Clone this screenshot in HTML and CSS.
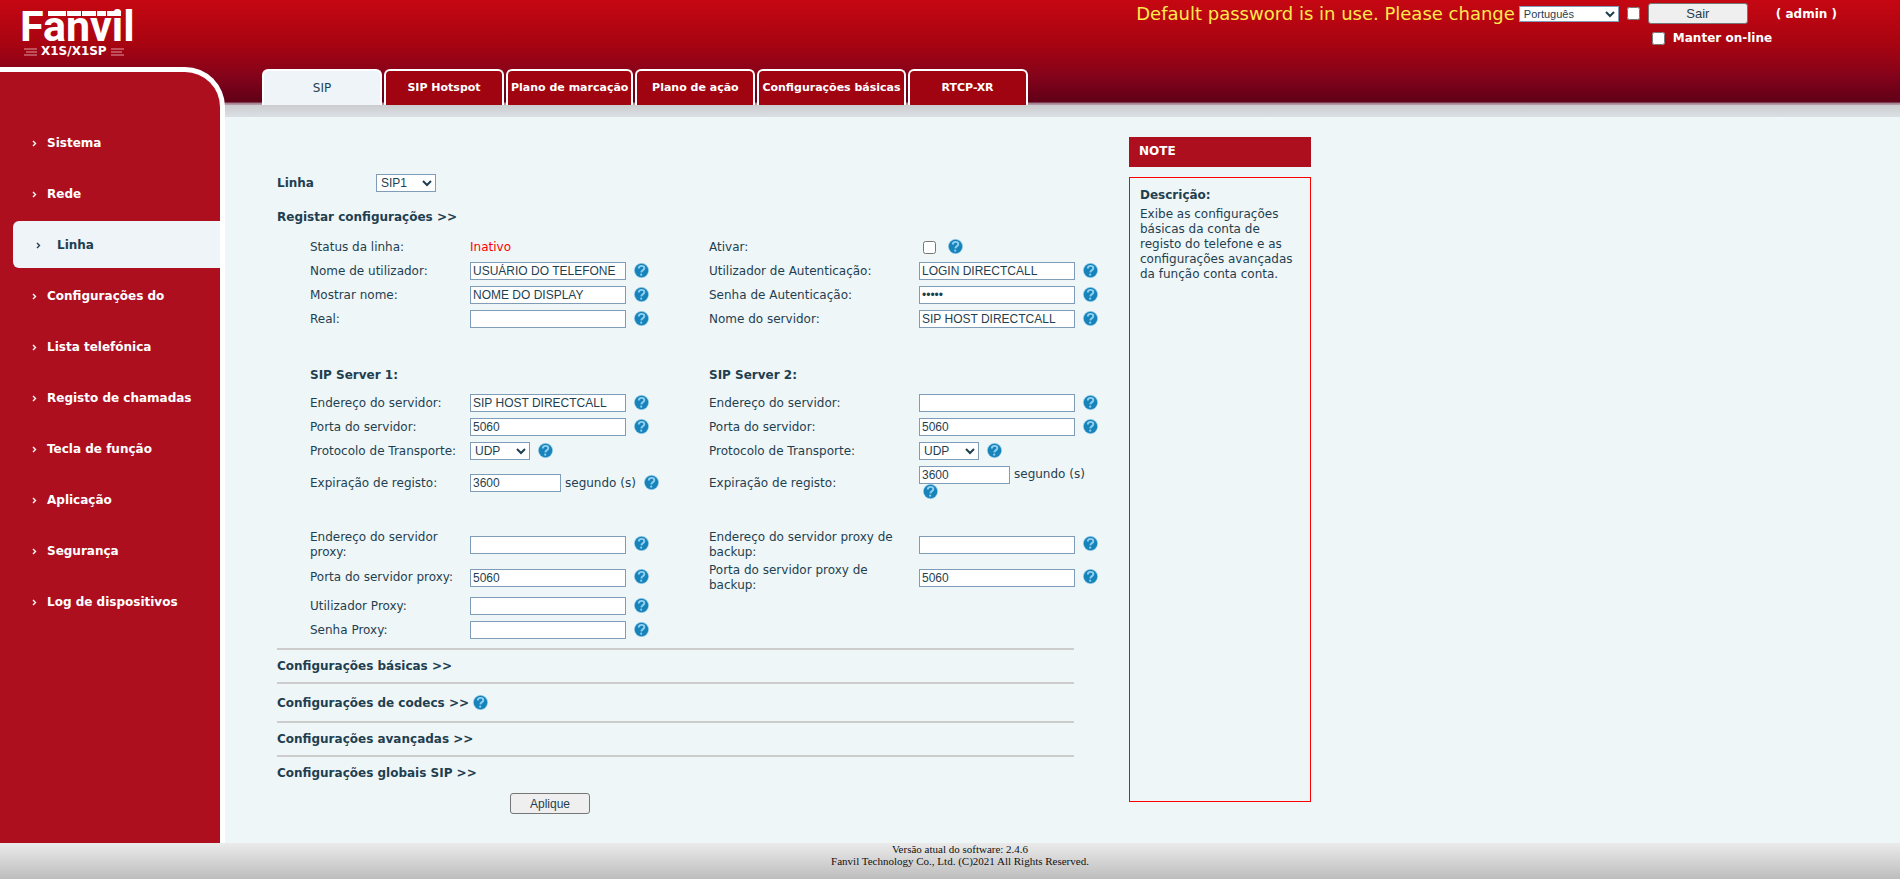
FILE: index.html
```html
<!DOCTYPE html>
<html lang="pt">
<head>
<meta charset="utf-8">
<title>Fanvil X1S/X1SP</title>
<link rel="stylesheet" href="styles.css">
</head>
<body>
<svg class="sprite" aria-hidden="true">
  <symbol id="help" viewBox="0 0 15 15">
    <circle cx="7.5" cy="7.5" r="7.4" fill="#8cc6e4"/>
    <circle cx="7.5" cy="7.5" r="6.7" fill="#1783bb"/>
    <path d="M4.800 5.600C4.800 3.800 6 2.900 7.500 2.900s2.800.8 2.800 2.300C10.300 7.200 7.500 7 7.300 9.400" fill="none" stroke="#8fd0f0" stroke-width="1.900"/>
    <circle cx="7.200" cy="11.700" r="1.100" fill="#8fd0f0"/>
  </symbol>
  <symbol id="arrow" viewBox="0 0 5 7">
    <path d="M1 1l2.500 2.500L1 6" fill="none" stroke="currentColor" stroke-width="1.400"/>
  </symbol>
</svg>
<div class="page">
  <div class="left">
    <div class="brand">
      <svg class="logo" viewBox="0 0 114 32" role="img" aria-label="Fanvil">
        <text class="logo-text" x="0" y="31">Fanvil</text>
        <path d="M28 1h18v5H28zM47 1h14v5H47zM62 1h14v5H62zM77 1h9v5H77zM87 1h14v5H87z" fill="#fff"/>
      </svg>
      <div class="model">
        <svg class="speed" viewBox="0 0 14 8" aria-hidden="true"><path d="M1 1h13M3 4h11M1 7h13" stroke="#e09aa0"/></svg>
        <span>X1S/X1SP</span>
        <svg class="speed" viewBox="0 0 14 8" aria-hidden="true"><path d="M0 1h13M0 4h11M0 7h13" stroke="#e09aa0"/></svg>
      </div>
    </div>
    <nav class="sidebar">
      <a class="item" href="#"><svg class="arrow"><use href="#arrow"/></svg>Sistema</a>
      <a class="item" href="#"><svg class="arrow"><use href="#arrow"/></svg>Rede</a>
      <a class="item active" href="#"><svg class="arrow"><use href="#arrow"/></svg>Linha</a>
      <a class="item" href="#"><svg class="arrow"><use href="#arrow"/></svg>Configurações do</a>
      <a class="item" href="#"><svg class="arrow"><use href="#arrow"/></svg>Lista telefónica</a>
      <a class="item" href="#"><svg class="arrow"><use href="#arrow"/></svg>Registo de chamadas</a>
      <a class="item" href="#"><svg class="arrow"><use href="#arrow"/></svg>Tecla de função</a>
      <a class="item" href="#"><svg class="arrow"><use href="#arrow"/></svg>Aplicação</a>
      <a class="item" href="#"><svg class="arrow"><use href="#arrow"/></svg>Segurança</a>
      <a class="item" href="#"><svg class="arrow"><use href="#arrow"/></svg>Log de dispositivos</a>
    </nav>
  </div>
  <div class="right">
    <header class="topbar">
      <span class="warning">Default password is in use. Please change</span>
      <select class="language" aria-label="Idioma"><option>Português</option></select>
      <input class="check" type="checkbox" aria-label="Idioma online">
      <div class="account">
        <div class="session"><button class="logout" type="button">Sair</button><span>( admin )</span></div>
        <label class="keep"><input class="check" type="checkbox">Manter on-line</label>
      </div>
    </header>
    <nav class="tabs">
      <a class="tab current" href="#">SIP</a>
      <a class="tab" href="#">SIP Hotspot</a>
      <a class="tab" href="#">Plano de marcação</a>
      <a class="tab" href="#">Plano de ação</a>
      <a class="tab" href="#">Configurações básicas</a>
      <a class="tab" href="#">RTCP-XR</a>
    </nav>
    <div class="content">
      <form class="settings">
        <div class="line">
          <label for="line">Linha</label>
          <select id="line" class="short"><option>SIP1</option></select>
        </div>
        <a class="section" href="#">Registar configurações &gt;&gt;</a>

        <div class="rows first">
          <span>Status da linha:</span>
          <span class="status">Inativo</span>
          <label for="enable">Ativar:</label>
          <div class="field"><input id="enable" class="enable" type="checkbox"><button class="help" type="button" aria-label="Ajuda"><svg><use href="#help"/></svg></button></div>

          <label for="user">Nome de utilizador:</label>
          <div class="field"><input id="user" class="text" type="text" value="USUÁRIO DO TELEFONE"><button class="help" type="button" aria-label="Ajuda"><svg><use href="#help"/></svg></button></div>
          <label for="auth">Utilizador de Autenticação:</label>
          <div class="field"><input id="auth" class="text" type="text" value="LOGIN DIRECTCALL"><button class="help" type="button" aria-label="Ajuda"><svg><use href="#help"/></svg></button></div>

          <label for="display">Mostrar nome:</label>
          <div class="field"><input id="display" class="text" type="text" value="NOME DO DISPLAY"><button class="help" type="button" aria-label="Ajuda"><svg><use href="#help"/></svg></button></div>
          <label for="pass">Senha de Autenticação:</label>
          <div class="field"><input id="pass" class="text" type="password" value="admin"><button class="help" type="button" aria-label="Ajuda"><svg><use href="#help"/></svg></button></div>

          <label for="realm">Real:</label>
          <div class="field"><input id="realm" class="text" type="text"><button class="help" type="button" aria-label="Ajuda"><svg><use href="#help"/></svg></button></div>
          <label for="server">Nome do servidor:</label>
          <div class="field"><input id="server" class="text" type="text" value="SIP HOST DIRECTCALL"><button class="help" type="button" aria-label="Ajuda"><svg><use href="#help"/></svg></button></div>
        </div>

        <div class="rows servers">
          <h2 class="server">SIP Server 1:</h2>
          <h2 class="server">SIP Server 2:</h2>

          <label for="addr1">Endereço do servidor:</label>
          <div class="field"><input id="addr1" class="text" type="text" value="SIP HOST DIRECTCALL"><button class="help" type="button" aria-label="Ajuda"><svg><use href="#help"/></svg></button></div>
          <label for="addr2">Endereço do servidor:</label>
          <div class="field"><input id="addr2" class="text" type="text"><button class="help" type="button" aria-label="Ajuda"><svg><use href="#help"/></svg></button></div>

          <label for="port1">Porta do servidor:</label>
          <div class="field"><input id="port1" class="text" type="text" value="5060"><button class="help" type="button" aria-label="Ajuda"><svg><use href="#help"/></svg></button></div>
          <label for="port2">Porta do servidor:</label>
          <div class="field"><input id="port2" class="text" type="text" value="5060"><button class="help" type="button" aria-label="Ajuda"><svg><use href="#help"/></svg></button></div>

          <label for="proto1">Protocolo de Transporte:</label>
          <div class="field"><select id="proto1" class="short"><option>UDP</option></select><button class="help" type="button" aria-label="Ajuda"><svg><use href="#help"/></svg></button></div>
          <label for="proto2">Protocolo de Transporte:</label>
          <div class="field"><select id="proto2" class="short"><option>UDP</option></select><button class="help" type="button" aria-label="Ajuda"><svg><use href="#help"/></svg></button></div>

          <label for="exp1">Expiração de registo:</label>
          <div class="field tall"><input id="exp1" class="text half" type="text" value="3600"><span>segundo (s)</span><button class="help" type="button" aria-label="Ajuda"><svg><use href="#help"/></svg></button></div>
          <label for="exp2">Expiração de registo:</label>
          <div class="field tall"><input id="exp2" class="text half" type="text" value="3600"><span>segundo (s)</span><button class="help" type="button" aria-label="Ajuda"><svg><use href="#help"/></svg></button></div>
        </div>

        <div class="rows proxy">
          <label for="paddr1">Endereço do servidor proxy:</label>
          <div class="field double"><input id="paddr1" class="text" type="text"><button class="help" type="button" aria-label="Ajuda"><svg><use href="#help"/></svg></button></div>
          <label for="paddr2">Endereço do servidor proxy de backup:</label>
          <div class="field double"><input id="paddr2" class="text" type="text"><button class="help" type="button" aria-label="Ajuda"><svg><use href="#help"/></svg></button></div>

          <label for="pport1">Porta do servidor proxy:</label>
          <div class="field double"><input id="pport1" class="text" type="text" value="5060"><button class="help" type="button" aria-label="Ajuda"><svg><use href="#help"/></svg></button></div>
          <label for="pport2">Porta do servidor proxy de backup:</label>
          <div class="field double"><input id="pport2" class="text" type="text" value="5060"><button class="help" type="button" aria-label="Ajuda"><svg><use href="#help"/></svg></button></div>

          <label class="newrow" for="puser">Utilizador Proxy:</label>
          <div class="field"><input id="puser" class="text" type="text"><button class="help" type="button" aria-label="Ajuda"><svg><use href="#help"/></svg></button></div>
          <label class="newrow" for="ppass">Senha Proxy:</label>
          <div class="field"><input id="ppass" class="text" type="password"><button class="help" type="button" aria-label="Ajuda"><svg><use href="#help"/></svg></button></div>
        </div>

        <div class="fold"><a class="section" href="#">Configurações básicas &gt;&gt;</a></div>
        <div class="fold codecs"><a class="section" href="#">Configurações de codecs &gt;&gt;</a><button class="help" type="button" aria-label="Ajuda"><svg><use href="#help"/></svg></button></div>
        <div class="fold"><a class="section" href="#">Configurações avançadas &gt;&gt;</a></div>
        <div class="fold"><a class="section" href="#">Configurações globais SIP &gt;&gt;</a></div>
        <button class="apply" type="button">Aplique</button>
      </form>
      <aside class="note">
        <h2 class="note-title">NOTE</h2>
        <div class="note-box">
          <h3 class="note-head">Descrição:</h3>
          <p class="note-text">Exibe as configurações básicas da conta de registo do telefone e as configurações avançadas da função conta conta.</p>
        </div>
      </aside>
    </div>
  </div>
</div>
<footer class="footer">
  <div>Versão atual do software: 2.4.6</div>
  <div>Fanvil Technology Co., Ltd. (C)2021 All Rights Reserved.</div>
</footer>
</body>
</html>
```
FILE: styles.css
```css
* { box-sizing: border-box; }

body {
  margin: 0;
  min-height: 100vh;
  display: flex;
  flex-direction: column;
  background: #eef6f8;
  color: #1f3f50;
  font: 12px/15px "DejaVu Sans", Verdana, sans-serif;
}

a { color: inherit; text-decoration: none; }
h2, h3, p { margin: 0; font-size: 12px; }
.sprite { display: none; }

.page {
  flex: 1;
  display: grid;
  grid-template-columns: 225px 1fr;
  background:
    linear-gradient(#c50712 0, #a80411 44px, #84031a 76px, #600018 102px, #a0788a 103px, #b9a4ae 105px, #cccccf 105px, #dbe0e4 117px, transparent 117px);
}

/* Left column */
.left { display: flex; flex-direction: column; }
.brand { height: 67px; padding: 10px 0 0 20px; }
.logo { display: block; width: 114px; height: 32px; overflow: visible; }
.logo-text { font: bold 43px Roboto, sans-serif; fill: #fff; }
.model {
  display: flex;
  align-items: center;
  gap: 4px;
  padding-left: 3px;
  height: 19px;
  color: #fff;
  font-weight: bold;
}
.speed { width: 14px; height: 8px; }

.sidebar {
  flex: 1;
  padding-top: 45px;
  background: #ad0f1f;
  border: solid #fff;
  border-width: 5px 5px 0 0;
  border-top-right-radius: 40px;
}
.item {
  display: flex;
  align-items: center;
  height: 51px;
  padding: 1px 0 0 32px;
  color: #fff;
  font-weight: bold;
}
.arrow { width: 5px; height: 7px; margin-right: 10px; }
.active {
  height: 47px;
  margin: 2px 0 2px 13px;
  padding-left: 23px;
  border-radius: 6px 0 0 6px;
  background: #eef4f8;
  color: #1f3f50;
}
.active .arrow { margin-right: 16px; }

/* Header */
.right { display: flex; flex-direction: column; min-width: 0; }
.topbar {
  height: 69px;
  display: flex;
  justify-content: flex-end;
  align-items: flex-start;
  padding: 3px 63px 0 0;
  color: #fff;
  font-weight: bold;
}
.warning { color: #ffe94d; font-size: 18px; font-weight: normal; line-height: 21px; margin-right: 4px; }
.check { width: 13px; height: 13px; margin: 0; }
.topbar > .check { margin: 4px 8px 0; }
select, .text {
  height: 18px;
  border: 1px solid #7f9db9;
  border-radius: 0;
  background: #fff;
  color: #1f3f50;
  font: 12px "Liberation Sans", Arial, sans-serif;
}
.language { width: 100px; height: 16px; margin-top: 3px; font-size: 11px; }
.session { display: flex; align-items: center; gap: 28px; line-height: 20px; }
.logout, .apply {
  height: 21px;
  border: 1px solid #767676;
  border-radius: 3px;
  background: #efefef;
  color: #1f3f50;
  font: 12px "Liberation Sans", Arial, sans-serif;
}
.logout { width: 100px; font-size: 13px; }
.keep { display: flex; align-items: center; gap: 8px; padding: 7px 0 0 4px; }

/* Tabs */
.tabs { display: flex; gap: 2px; height: 36px; padding-left: 37px; }
.tab {
  min-width: 120px;
  padding: 0 3px;
  border: 2px solid #fff;
  border-bottom: 0;
  border-radius: 6px 6px 0 0;
  background: #a00410;
  color: #fff;
  font-size: 11px;
  font-weight: bold;
  line-height: 34px;
  text-align: center;
}
.current { background: #eef4f8; color: #1f3f50; font-size: 12px; font-weight: normal; }

/* Content */
.content { flex: 1; display: flex; gap: 30px; padding: 32px 0 28px 52px; }
.settings { width: 822px; padding-top: 37px; }
.line { display: flex; align-items: center; font-weight: bold; margin-bottom: 18px; }
.line label { width: 99px; }
.short { width: 60px; }
.section { font-weight: bold; }

.rows {
  display: grid;
  grid-template-columns: 160px 239px 210px 180px;
  align-items: center;
  margin-left: 33px;
}
.rows label { padding-right: 8px; }
.first { padding-top: 10px; }
.servers { padding-top: 37px; }
.proxy { padding-top: 25px; }
.server { grid-column: span 2; height: 23px; }
.newrow { grid-column: 1; }
.status { color: #f00; }
.field { display: flex; flex-wrap: wrap; align-items: center; gap: 0 4px; min-height: 24px; }
.tall { min-height: 40px; align-content: center; }
.double { min-height: 33px; }
.text { width: 156px; padding: 0 2px; }
.half { width: 91px; }
.enable { width: 13px; height: 13px; margin: 0 4px; }
.help { width: 15px; height: 15px; margin: 0 0 2px 4px; padding: 0; border: 0; background: none; }
.help svg { display: block; width: 15px; height: 15px; }

.fold {
  display: flex;
  align-items: center;
  height: 34px;
  margin-right: 25px;
  padding-top: 1px;
  border-top: 2px solid #cccccc;
}
.proxy + .fold { margin-top: 6px; }
.codecs { height: 39px; }
.apply { display: block; width: 80px; margin: 4px 0 0 233px; }

.note { width: 182px; display: flex; flex-direction: column; gap: 10px; margin-bottom: 13px; }
.note-title { padding: 7px 10px 8px; background: #ad0f1f; color: #fff; }
.note-box { flex: 1; padding: 10px; border: 1px solid #f00; }
.note-head { margin-bottom: 4px; }

.footer {
  height: 36px;
  padding-left: 20px;
  background: linear-gradient(#ebebeb, #bdbdbd);
  color: #111;
  font: 11px/12px "Liberation Serif", "Times New Roman", serif;
  text-align: center;
}
```
